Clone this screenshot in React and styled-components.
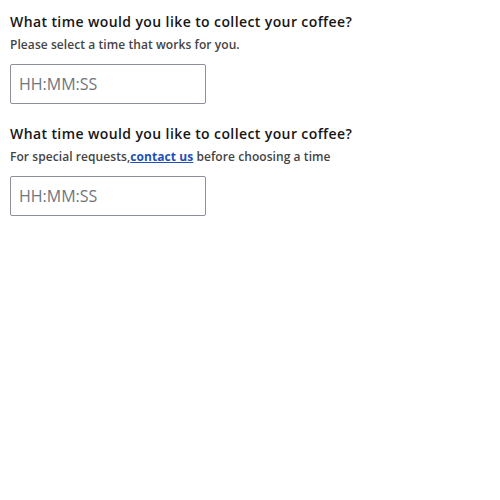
import React from "react";
import styled, { createGlobalStyle } from "styled-components";

const Global = createGlobalStyle`
  body { margin: 0; background: #fff; font-family: "Open Sans", sans-serif; }
`;

const Page = styled.div`
  padding: 10px;
  display: flex;
  flex-direction: column;
  gap: 18px;
`;

const Field = styled.div`
  display: flex;
  flex-direction: column;
`;

const Label = styled.label`
  font-size: 14px;
  font-weight: 600;
  letter-spacing: 0.4px;
  line-height: 24px;
  color: #161616;
`;

const Hint = styled.div`
  font-size: 12px;
  font-weight: 600;
  letter-spacing: 0.07px;
  line-height: 20px;
  color: #444;
  margin: 1px 0 9px;
`;

const Link = styled.a`
  color: #1f4fb8;
  font-weight: 700;
  text-decoration: underline;
`;

const Input = styled.input`
  box-sizing: border-box;
  width: 196px;
  height: 40px;
  border: 1px solid #8c9099;
  border-radius: 2px;
  padding: 0 8px;
  font-family: "Open Sans", sans-serif;
  font-size: 16px;
  color: #222;
  &::placeholder { color: #6f7680; }
`;

export default function App() {
  return (
    <>
      <Global />
      <Page>
        <Field>
          <Label>What time would you like to collect your coffee?</Label>
          <Hint>Please select a time that works for you.</Hint>
          <Input placeholder="HH:MM:SS" />
        </Field>
        <Field>
          <Label>What time would you like to collect your coffee?</Label>
          <Hint>
            For special requests,<Link href="#">contact us</Link> before choosing a time
          </Hint>
          <Input placeholder="HH:MM:SS" />
        </Field>
      </Page>
    </>
  );
}
